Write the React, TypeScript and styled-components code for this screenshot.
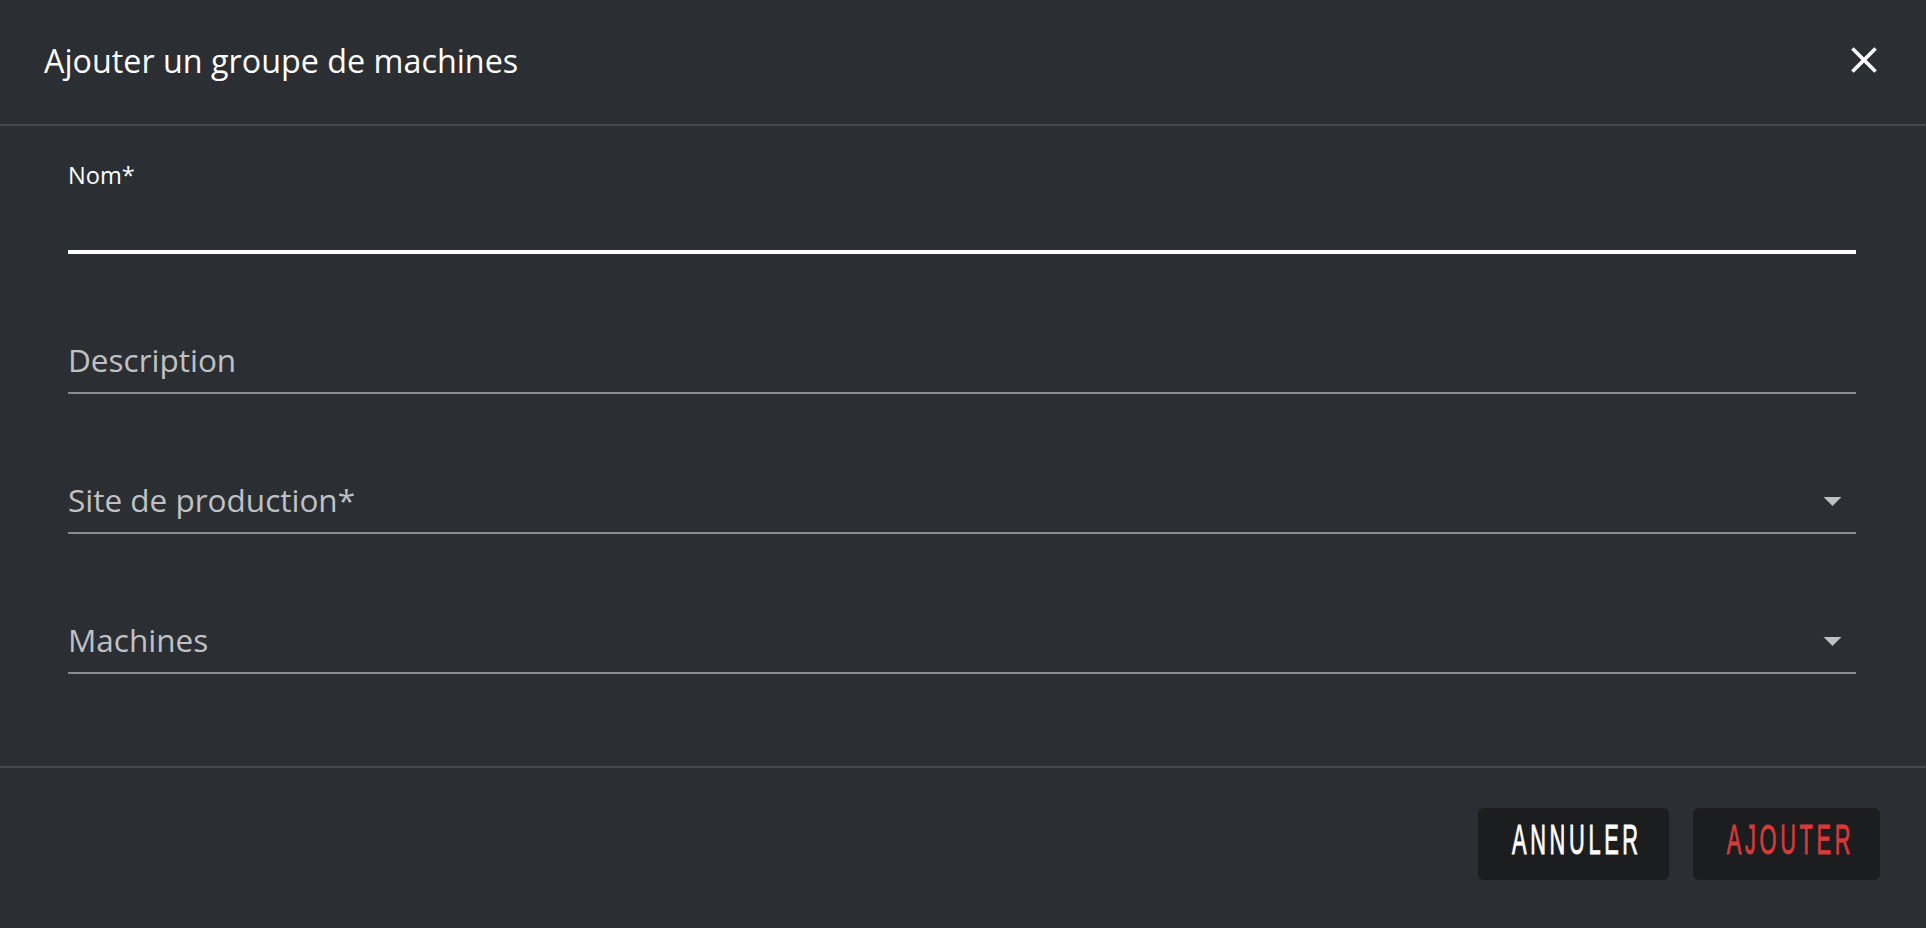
import React from 'react'
import styled, { createGlobalStyle } from 'styled-components'

const GlobalStyle = createGlobalStyle`
  html, body {
    margin: 0;
    padding: 0;
    background: #2b2e33;
  }
  * {
    box-sizing: border-box;
  }
`

const Dialog = styled.div`
  --bg: #2b2e33;
  --divider: #45484d;
  --label: #c0c1c3;
  --line: #8b8c8f;

  display: flex;
  flex-direction: column;
  height: 928px;
  background: var(--bg);
  font-family: 'Open Sans', Lato, sans-serif;
  color: #fff;
`

const Header = styled.header`
  height: 126px;
  flex-shrink: 0;
  display: flex;
  align-items: center;
  justify-content: space-between;
  padding: 0 40px 5px 44px;
  border-bottom: solid 2px var(--divider);
`

const Title = styled.h2`
  margin: 0;
  font-size: 32.3px;
  font-weight: 400;
  color: #fff;
`

const CloseButton = styled.button`
  width: 44px;
  height: 44px;
  padding: 0;
  border: 0;
  background: none;
  color: #fff;
  display: flex;
  align-items: center;
  justify-content: center;
  cursor: pointer;
`

const Body = styled.div`
  flex: 1;
  display: flex;
  flex-direction: column;
  gap: 46px;
  padding: 34px 70px 0 68px;
`

const Field = styled.div`
  display: flex;
  flex-direction: column;
  gap: 8px;
`

const ShrunkLabel = styled.label<{ $visible: boolean }>`
  height: 30px;
  font-size: 23.6px;
  line-height: 30px;
  color: #fff;
  visibility: ${p => (p.$visible ? 'visible' : 'hidden')};
`

const InputRow = styled.div<{ $focused: boolean }>`
  display: flex;
  align-items: center;
  height: 56px;
  padding-bottom: ${p => (p.$focused ? 8 : 10)}px;
  border-bottom: solid ${p => (p.$focused ? '4px #fff' : '2px var(--line)')};
`

const Placeholder = styled.span`
  flex: 1;
  font-size: 31.5px;
  line-height: 44px;
  color: var(--label);
`

const Arrow = styled.svg`
  width: 43px;
  height: 43px;
  margin-right: 2px;
  fill: var(--label);
`

const Footer = styled.footer`
  height: 162px;
  flex-shrink: 0;
  display: flex;
  justify-content: flex-end;
  align-items: flex-start;
  gap: 24px;
  padding: 40px 46px 0 0;
  border-top: solid 2px var(--divider);
`

const Button = styled.button<{ $width: number; $accent?: boolean }>`
  width: ${p => p.$width}px;
  height: 72px;
  border: 0;
  border-radius: 6px;
  background: #1c1d1f;
  color: ${p => (p.$accent ? '#d83a3a' : '#fff')};
  display: flex;
  align-items: center;
  justify-content: center;
  padding: 0 0 8px;
  cursor: pointer;
`

const ButtonText = styled.span`
  display: inline-block;
  font-family: 'Liberation Sans', Arial, sans-serif;
  font-weight: 400;
  font-size: 42px;
  line-height: 42px;
  letter-spacing: 7px;
  margin-right: -7px;
  -webkit-text-stroke: 0.9px currentColor;
  transform: scaleX(0.52);
  white-space: nowrap;
`

const fields = [
  { label: 'Nom*', focused: true, select: false },
  { label: 'Description', focused: false, select: false },
  { label: 'Site de production*', focused: false, select: true },
  { label: 'Machines', focused: false, select: true },
]

export default function App() {
  return (
    <>
      <GlobalStyle />
      <Dialog>
        <Header>
          <Title>Ajouter un groupe de machines</Title>
          <CloseButton aria-label="Fermer">
            <svg width="44" height="44" viewBox="0 0 24 24" fill="currentColor">
              <path d="M19 6.41L17.59 5 12 10.59 6.41 5 5 6.41 10.59 12 5 17.59 6.41 19 12 13.41 17.59 19 19 17.59 13.41 12z" />
            </svg>
          </CloseButton>
        </Header>

        <Body>
          {fields.map(field => (
            <Field key={field.label}>
              <ShrunkLabel $visible={field.focused}>{field.label}</ShrunkLabel>
              <InputRow $focused={field.focused}>
                <Placeholder>{field.focused ? '' : field.label}</Placeholder>
                {field.select && (
                  <Arrow viewBox="0 0 24 24">
                    <path d="M7 10l5 5 5-5z" />
                  </Arrow>
                )}
              </InputRow>
            </Field>
          ))}
        </Body>

        <Footer>
          <Button $width={191}>
            <ButtonText>ANNULER</ButtonText>
          </Button>
          <Button $width={187} $accent>
            <ButtonText>AJOUTER</ButtonText>
          </Button>
        </Footer>
      </Dialog>
    </>
  )
}
